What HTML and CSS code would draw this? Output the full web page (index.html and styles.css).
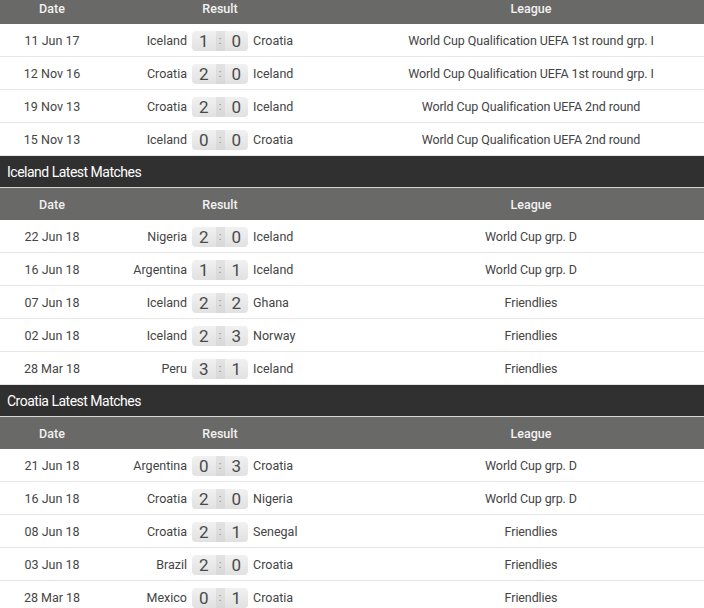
FILE: index.html
```html
<!DOCTYPE html>
<html lang="en">
<head>
<meta charset="utf-8">
<title>Head to head</title>
<link rel="stylesheet" href="styles.css">
</head>
<body>
<div class="wrap">
  <section class="block">
    <div class="thead"><div>Date</div><div>Result</div><div class="lg">League</div></div>
    <div class="row"><div class="date">11 Jun 17</div><div class="res"><span class="home">Iceland</span><span class="score"><b>1</b><i>:</i><b>0</b></span><span class="away">Croatia</span></div><div class="lg">World Cup Qualification UEFA 1st round grp. I</div></div>
    <div class="row"><div class="date">12 Nov 16</div><div class="res"><span class="home">Croatia</span><span class="score"><b>2</b><i>:</i><b>0</b></span><span class="away">Iceland</span></div><div class="lg">World Cup Qualification UEFA 1st round grp. I</div></div>
    <div class="row"><div class="date">19 Nov 13</div><div class="res"><span class="home">Croatia</span><span class="score"><b>2</b><i>:</i><b>0</b></span><span class="away">Iceland</span></div><div class="lg">World Cup Qualification UEFA 2nd round</div></div>
    <div class="row"><div class="date">15 Nov 13</div><div class="res"><span class="home">Iceland</span><span class="score"><b>0</b><i>:</i><b>0</b></span><span class="away">Croatia</span></div><div class="lg">World Cup Qualification UEFA 2nd round</div></div>
  </section>
  <section class="block">
    <h2 class="title">Iceland Latest Matches</h2>
    <div class="thead"><div>Date</div><div>Result</div><div class="lg">League</div></div>
    <div class="row"><div class="date">22 Jun 18</div><div class="res"><span class="home">Nigeria</span><span class="score"><b>2</b><i>:</i><b>0</b></span><span class="away">Iceland</span></div><div class="lg">World Cup grp. D</div></div>
    <div class="row"><div class="date">16 Jun 18</div><div class="res"><span class="home">Argentina</span><span class="score"><b>1</b><i>:</i><b>1</b></span><span class="away">Iceland</span></div><div class="lg">World Cup grp. D</div></div>
    <div class="row"><div class="date">07 Jun 18</div><div class="res"><span class="home">Iceland</span><span class="score"><b>2</b><i>:</i><b>2</b></span><span class="away">Ghana</span></div><div class="lg">Friendlies</div></div>
    <div class="row"><div class="date">02 Jun 18</div><div class="res"><span class="home">Iceland</span><span class="score"><b>2</b><i>:</i><b>3</b></span><span class="away">Norway</span></div><div class="lg">Friendlies</div></div>
    <div class="row"><div class="date">28 Mar 18</div><div class="res"><span class="home">Peru</span><span class="score"><b>3</b><i>:</i><b>1</b></span><span class="away">Iceland</span></div><div class="lg">Friendlies</div></div>
  </section>
  <section class="block">
    <h2 class="title">Croatia Latest Matches</h2>
    <div class="thead"><div>Date</div><div>Result</div><div class="lg">League</div></div>
    <div class="row"><div class="date">21 Jun 18</div><div class="res"><span class="home">Argentina</span><span class="score"><b>0</b><i>:</i><b>3</b></span><span class="away">Croatia</span></div><div class="lg">World Cup grp. D</div></div>
    <div class="row"><div class="date">16 Jun 18</div><div class="res"><span class="home">Croatia</span><span class="score"><b>2</b><i>:</i><b>0</b></span><span class="away">Nigeria</span></div><div class="lg">World Cup grp. D</div></div>
    <div class="row"><div class="date">08 Jun 18</div><div class="res"><span class="home">Croatia</span><span class="score"><b>2</b><i>:</i><b>1</b></span><span class="away">Senegal</span></div><div class="lg">Friendlies</div></div>
    <div class="row"><div class="date">03 Jun 18</div><div class="res"><span class="home">Brazil</span><span class="score"><b>2</b><i>:</i><b>0</b></span><span class="away">Croatia</span></div><div class="lg">Friendlies</div></div>
    <div class="row"><div class="date">28 Mar 18</div><div class="res"><span class="home">Mexico</span><span class="score"><b>0</b><i>:</i><b>1</b></span><span class="away">Croatia</span></div><div class="lg">Friendlies</div></div>
  </section>
</div>
</body>
</html>
```
FILE: styles.css
```css
html, body {
  margin: 0;
  padding: 0;
  background: #ffffff;
}
body {
  font-family: Roboto, "Liberation Sans", sans-serif;
  font-size: 12.5px;
  color: #444444;
  overflow: hidden;
}
.wrap {
  width: 704px;
  margin-top: -8px;
}
.title {
  margin: 0;
  box-sizing: border-box;
  height: 32px;
  padding: 0 0 0 7px;
  display: flex;
  align-items: center;
  background: #303030;
  color: #ffffff;
  font-size: 14px;
  letter-spacing: -0.5px;
  font-weight: 400;
  border-bottom: 1px solid #d6d6d4;
}
.thead, .row {
  display: grid;
  grid-template-columns: 104px 232px 1fr;
  align-items: center;
}
.thead {
  height: 32px;
  background: #696967;
  color: #f2f2f2;
  font-size: 12.5px;
  font-weight: 500;
  text-align: center;
}
.row {
  height: 32px;
  border-bottom: 1px solid #e6e6e6;
  text-align: center;
}
.lg {
  padding-left: 22px;
}
.row .lg {
  letter-spacing: -0.1px;
}
.res {
  display: grid;
  grid-template-columns: 1fr 56px 1fr;
  column-gap: 5px;
  align-items: center;
}
.home {
  text-align: right;
}
.away {
  text-align: left;
}
.score {
  display: grid;
  grid-template-columns: 1fr 9px 1fr;
  height: 20px;
  margin-top: 1px;
  border-radius: 4px;
  overflow: hidden;
  background: linear-gradient(#f1f1f1, #e1e1e1);
  font-size: 17px;
  line-height: 20px;
  color: #4a4a4a;
}
.score b {
  font-weight: 400;
  text-align: center;
}
.score i {
  font-style: normal;
  font-size: 11px;
  color: #888888;
  background: linear-gradient(#e3e3e3, #d8d8d8);
  text-align: center;
}
```
